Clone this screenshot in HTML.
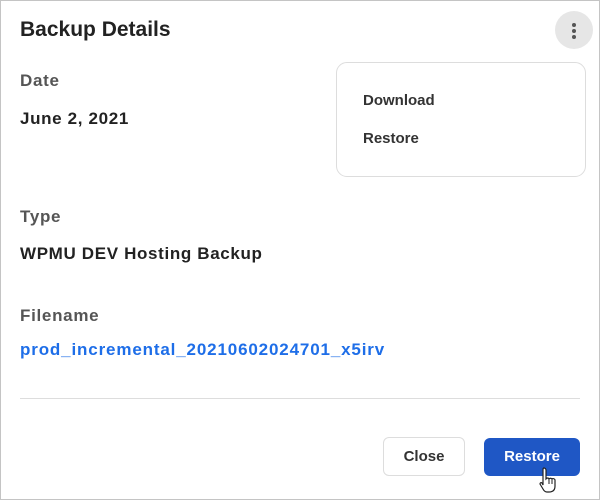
<!DOCTYPE html>
<html><head><style>
*{margin:0;padding:0;box-sizing:border-box}
body{width:600px;height:500px;background:#fff;font-family:"Liberation Sans",Arial,sans-serif;position:relative;overflow:hidden}
.frame{position:absolute;left:0;top:0;width:600px;height:500px;border:1px solid #c4c4c4}
.t{position:absolute;white-space:nowrap}
.title{left:20px;top:18px;font-size:21px;font-weight:bold;color:#222}
.lbl{left:20px;font-size:17px;letter-spacing:0.7px;font-weight:bold;color:#555}
.val{left:20px;font-size:17px;letter-spacing:0.65px;font-weight:bold;color:#222}
.kebab{position:absolute;left:555px;top:11px;width:38px;height:38px;border-radius:50%;background:#e6e6e6}
.kebab i{position:absolute;left:17px;width:4px;height:4px;border-radius:50%;background:#555}
.menu{position:absolute;left:336px;top:62px;width:250px;height:115px;border:1px solid #ddd;border-radius:11px;background:#fff}
.menu div{position:absolute;left:26px;font-size:15px;font-weight:bold;color:#333}
.hr{position:absolute;left:20px;top:398px;width:560px;height:1px;background:#ddd}
.btn{position:absolute;border-radius:6px;font-size:15px;font-weight:bold;text-align:center}
</style></head><body>
<div class="frame"></div>
<div class="t title">Backup Details</div>
<div class="kebab"><i style="top:12px"></i><i style="top:18px"></i><i style="top:24px"></i></div>
<div class="t lbl" style="top:71px">Date</div>
<div class="t val" style="top:109px">June 2, 2021</div>
<div class="menu"><div style="top:29px">Download</div><div style="top:67px">Restore</div></div>
<div class="t lbl" style="top:207px">Type</div>
<div class="t val" style="top:244px">WPMU DEV Hosting Backup</div>
<div class="t lbl" style="top:306px">Filename</div>
<div class="t val" style="top:340px;color:#1e6ee8;letter-spacing:0.85px">prod_incremental_20210602024701_x5irv</div>
<div class="hr"></div>
<div class="btn" style="left:383px;top:437px;width:82px;height:39px;border:1px solid #ddd;color:#333;line-height:37px">Close</div>
<div class="btn" style="left:484px;top:438px;width:96px;height:38px;background:#1f57c5;color:#fff;line-height:38px">Restore</div>
<svg style="position:absolute;left:538px;top:466px" width="22" height="28" viewBox="0 0 22 28"><path d="M6 2c1 0 2 1 2 2v9l1-1c1 0 2 0 2 1 1-1 2-1 3 0 1-1 3 0 3 1v6c0 4-2 6-6 6h-2c-2 0-3-1-4-3l-3-5c0-1 1-2 2-1l1 2V4c0-1 0-2 1-2z" fill="#fff" stroke="#222" stroke-width="1.2"/><path d="M11 13v5M14 13v5" stroke="#222" stroke-width="1"/></svg>
</body></html>
